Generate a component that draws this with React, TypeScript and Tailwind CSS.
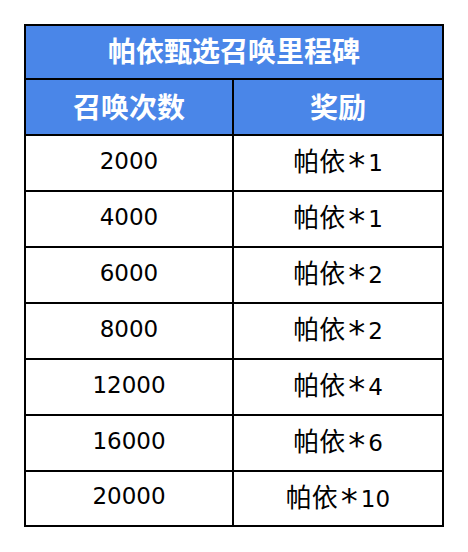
const rows = [
  { count: "2000", qty: "1" },
  { count: "4000", qty: "1" },
  { count: "6000", qty: "2" },
  { count: "8000", qty: "2" },
  { count: "12000", qty: "4" },
  { count: "16000", qty: "6" },
  { count: "20000", qty: "10" },
];

const cjkBold = {
  fontFamily: '"Noto Sans CJK SC", "Noto Sans", sans-serif',
};

const bodyFont = {
  fontFamily: '"DejaVu Sans", "Noto Sans CJK SC", sans-serif',
};

const App = () => {
  return (
    <div className="min-h-[552px] w-[468px] bg-white pl-[24px] pt-[24px]">
      <div className="w-[420px] border-2 border-black">
        <div
          className="flex h-[54px] items-center justify-center border-b-2 border-black bg-[#4a86e8] pb-[5px] text-[28px] font-bold leading-none text-white"
          style={cjkBold}
        >
          帕依甄选召唤里程碑
        </div>
        <div
          className="grid h-[56px] grid-cols-[208px_1fr] border-b-2 border-black bg-[#4a86e8] text-[28px] font-bold leading-none text-white"
          style={cjkBold}
        >
          <div className="flex items-center justify-center border-r-2 border-black pb-[3px]">
            召唤次数
          </div>
          <div className="flex items-center justify-center pb-[3px]">奖励</div>
        </div>
        {rows.map((row, index) => (
          <div
            key={index}
            className={
              index === rows.length - 1
                ? "grid h-[53px] grid-cols-[208px_1fr] text-[23px] leading-none text-black"
                : "grid h-[56px] grid-cols-[208px_1fr] border-b-2 border-black text-[23px] leading-none text-black"
            }
            style={bodyFont}
          >
            <div className="flex items-center justify-center border-r-2 border-black pb-[4px]">
              {row.count}
            </div>
            <div className="flex items-center justify-center pb-[4px]">
              <span>
                <span
                  className="text-[26px] font-normal"
                  style={{ fontFamily: '"Noto Sans CJK SC", sans-serif' }}
                >
                  帕依
                </span>
                <span className="mx-[3px] inline-block align-[-6px] text-[34px] leading-[0]">
                  *
                </span>
                {row.qty}
              </span>
            </div>
          </div>
        ))}
      </div>
    </div>
  );
};

export default App;
